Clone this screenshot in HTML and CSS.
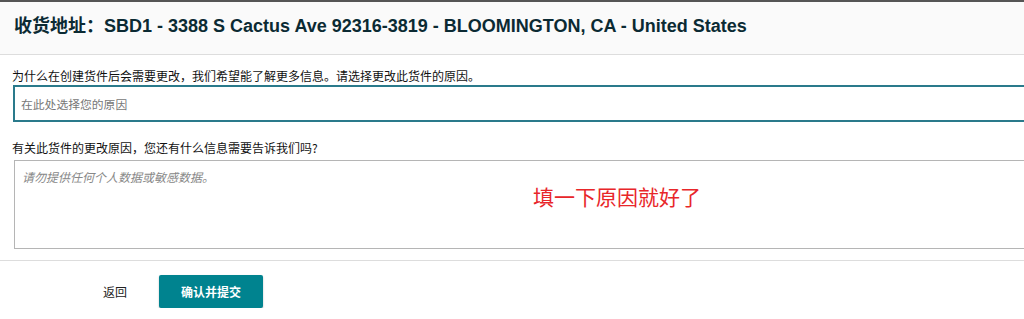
FILE: index.html
```html
<!DOCTYPE html>
<html lang="zh-CN">
<head>
<meta charset="utf-8">
<title>收货地址</title>
<link rel="stylesheet" href="styles.css">
</head>
<body>
<div class="topbar"></div>
<header class="header">
  <h1 class="title">收货地址：SBD1 - 3388 S Cactus Ave 92316-3819 - BLOOMINGTON, CA - United States</h1>
</header>
<main class="form">
  <label class="label label-first">为什么在创建货件后会需要更改，我们希望能了解更多信息。请选择更改此货件的原因。</label>
  <div class="select">在此处选择您的原因</div>
  <label class="label label-second">有关此货件的更改原因，您还有什么信息需要告诉我们吗?</label>
  <div class="textarea-wrap">
    <div class="textarea">请勿提供任何个人数据或敏感数据。</div>
    <div class="note">填一下原因就好了</div>
  </div>
</main>
<footer class="footer">
  <span class="back">返回</span>
  <button class="submit">确认并提交</button>
</footer>
</body>
</html>
```
FILE: styles.css
```css
html, body {
  margin: 0;
  padding: 0;
  background: #ffffff;
  overflow: hidden;
  font-family: "Liberation Sans", "Noto Sans CJK SC", sans-serif;
}
.topbar {
  height: 2px;
  background: #555555;
}
.header {
  height: 53px;
  background: #fafafa;
  border-bottom: 1px solid #dddddd;
  box-sizing: border-box;
  padding: 14px 0 0 14px;
}
.title {
  margin: 0;
  font-size: 18px;
  line-height: 21px;
  font-weight: bold;
  color: #0b2a33;
  white-space: nowrap;
}
.form {
  padding-left: 13px;
  margin-right: -30px;
  display: flex;
  flex-direction: column;
}
.label {
  display: block;
  font-family: "Noto Sans CJK SC", sans-serif;
  font-size: 12px;
  line-height: 14px;
  color: #111111;
  margin-left: -1px;
}
.label-first {
  margin-top: 14px;
}
.select {
  margin-top: 2px;
  height: 37px;
  box-sizing: border-box;
  border: 2px solid #2a7a8b;
  padding-left: 6px;
  display: flex;
  align-items: center;
  font-family: "Noto Sans CJK SC", sans-serif;
  font-size: 11.8px;
  color: #777777;
}
.label-second {
  margin-top: 19px;
}
.textarea-wrap {
  position: relative;
  margin-top: 5px;
  margin-left: 1px;
}
.textarea {
  height: 89px;
  box-sizing: border-box;
  border: 1px solid #b5b5b5;
  padding: 9px 0 0 7px;
  font-family: "Noto Sans CJK SC", sans-serif;
  font-size: 12px;
  font-style: italic;
  color: #888888;
  line-height: 14px;
}
.note {
  position: absolute;
  left: 519px;
  top: 22px;
  font-family: "Noto Sans CJK SC", sans-serif;
  font-size: 21px;
  line-height: 28px;
  color: #e8262a;
}
.footer {
  margin-top: 11px;
  border-top: 1px solid #dddddd;
  padding-top: 14px;
  display: flex;
  align-items: center;
}
.back {
  margin-left: 103px;
  font-family: "Noto Sans CJK SC", sans-serif;
  font-size: 12px;
  color: #222222;
}
.submit {
  margin-left: 32px;
  width: 104px;
  height: 33px;
  border: none;
  border-radius: 2px;
  background: #00838f;
  box-shadow: 0 1px 2px rgba(0, 0, 0, 0.25);
  color: #ffffff;
  font-family: "Noto Sans CJK SC", sans-serif;
  font-size: 12px;
  font-weight: bold;
  padding: 0;
}
```
